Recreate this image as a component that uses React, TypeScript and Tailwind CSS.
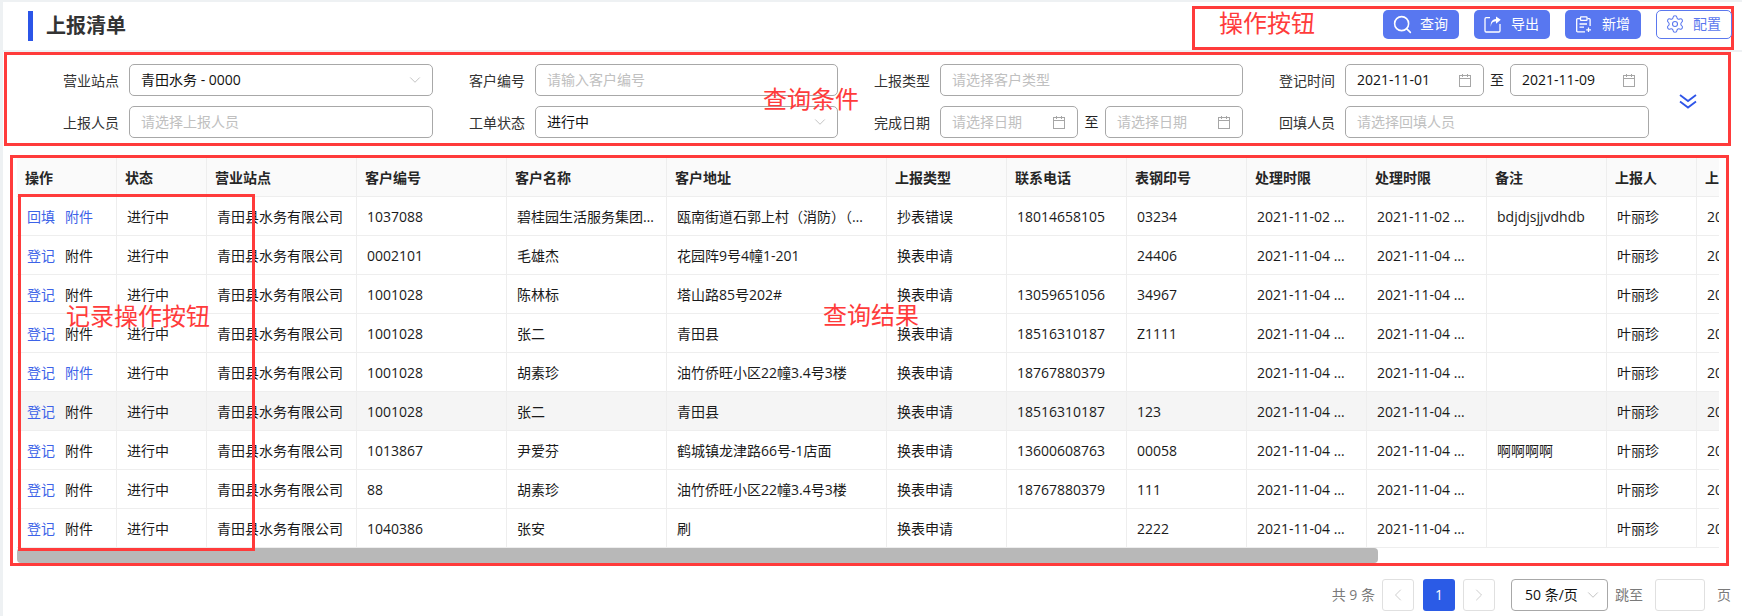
import React from "react";
import { ChevronDown, ChevronLeft, ChevronRight, Search, Settings } from "lucide-react";

type Row = {
   action: string;
   attachBlue?: boolean;
   code: string;
   name: string;
   address: string;
   type?: string;
   phone?: string;
   meter?: string;
   date?: string;
   note?: string;
   active?: boolean;
};

const headers = [
   "操作",
   "状态",
   "营业站点",
   "客户编号",
   "客户名称",
   "客户地址",
   "上报类型",
   "联系电话",
   "表钢印号",
   "处理时限",
   "处理时限",
   "备注",
   "上报人",
   "上报时间",
];

const rows: Row[] = [
   {
      action: "回填",
      attachBlue: true,
      code: "1037088",
      name: "碧桂园生活服务集团有限公司",
      address: "瓯南街道石郭上村（消防）（青田县）",
      type: "抄表错误",
      phone: "18014658105",
      meter: "03234",
      date: "2021-11-02 00:00:00",
      note: "bdjdjsjjvdhdb",
   },
   { action: "登记", code: "0002101", name: "毛雄杰", address: "花园阵9号4幢1-201", meter: "24406" },
   { action: "登记", code: "1001028", name: "陈林标", address: "塔山路85号202#", phone: "13059651056", meter: "34967" },
   { action: "登记", code: "1001028", name: "张二", address: "青田县", phone: "18516310187", meter: "Z1111" },
   {
      action: "登记",
      attachBlue: true,
      code: "1001028",
      name: "胡素珍",
      address: "油竹侨旺小区22幢3.4号3楼",
      phone: "18767880379",
   },
   { action: "登记", code: "1001028", name: "张二", address: "青田县", phone: "18516310187", meter: "123", active: true },
   {
      action: "登记",
      code: "1013867",
      name: "尹爱芬",
      address: "鹤城镇龙津路66号-1店面",
      phone: "13600608763",
      meter: "00058",
      note: "啊啊啊啊",
   },
   { action: "登记", code: "88", name: "胡素珍", address: "油竹侨旺小区22幢3.4号3楼", phone: "18767880379", meter: "111" },
   { action: "登记", code: "1040386", name: "张安", address: "刷", meter: "2222" },
];

function CalendarIcon() {
   return (
      <svg width="12" height="13" viewBox="0 0 12 13" fill="none" stroke="#a6a6a6" strokeWidth="1" className="shrink-0">
         <rect x="0.5" y="1.5" width="11" height="11" />
         <path d="M0.5 4.5H11.5M3.5 0V3M8.5 0V3" />
      </svg>
   );
}

function DoubleChevron() {
   return (
      <svg width="18" height="15" viewBox="0 0 18 15" fill="none" stroke="#2f55e8" strokeWidth="1.8">
         <path d="M1 1L9 7L17 1M1 7.5L9 13.5L17 7.5" />
      </svg>
   );
}

function ExportIcon() {
   return (
      <svg width="18" height="17" viewBox="0 0 18 17" fill="none" stroke="white" strokeWidth="1.3" className="shrink-0">
         <path d="M6 1.7H2.2A1.2 1.2 0 0 0 1 2.9V14.8A1.2 1.2 0 0 0 2.2 16H14.8A1.2 1.2 0 0 0 16 14.8V8" />
         <path d="M7 11C7 7.5 8.5 5.5 12 5.3V7.8L16.8 3.8L12 0.6V3C8 3.4 6 6.5 7 11Z" fill="white" stroke="none" />
      </svg>
   );
}

function AddIcon() {
   return (
      <svg width="16" height="17" viewBox="0 0 16 17" fill="none" stroke="white" strokeWidth="1.3" className="shrink-0">
         <path d="M4 2.7H1.6A0.9 0.9 0 0 0 0.7 3.6V15A0.9 0.9 0 0 0 1.6 15.9H9M11.5 2.7H13.2A0.9 0.9 0 0 1 14.1 3.6V10" />
         <rect x="4.5" y="0.8" width="6.5" height="3.5" rx="0.6" />
         <path d="M3.5 8H11M3.5 11.2H8M12.5 11.5V16M10.2 13.8H15" />
      </svg>
   );
}

function ActionButton(props: { icon: React.ReactNode; label: string; outline?: boolean }) {
   return (
      <button
         className={
            props.outline
               ? "w-[76px] h-[29px] pl-[10px] rounded-[5px] border border-[#5b78ee] bg-white text-[#5b78ee] flex items-center text-sm"
               : "w-[76px] h-[29px] pl-[11px] rounded-[5px] bg-[#5877f0] text-white flex items-center text-sm"
         }
      >
         <span className="w-[16px] h-[16px] flex items-center justify-center shrink-0">{props.icon}</span>
         <span className="ml-[10px]">{props.label}</span>
      </button>
   );
}

function TextBox(props: { value?: string; placeholder?: string; select?: boolean; narrow?: boolean }) {
   return (
      <div
         className={
            (props.narrow ? "w-[303px]" : "w-[304px]") +
            " shrink-0 h-[32px] rounded-[5px] border border-[#a8a8a8] bg-white pl-[11px] pr-[8px] flex items-center justify-between text-sm"
         }
      >
         {props.value ? (
            <span className="text-[#111]">{props.value}</span>
         ) : (
            <span className="text-[#c0c0c0]">{props.placeholder}</span>
         )}
         {props.select && <ChevronDown size={18} strokeWidth={0.9} color="#a6a6a6" />}
      </div>
   );
}

function DateBox(props: { value?: string; wide?: boolean }) {
   return (
      <div
         className={
            (props.wide ? "w-[139px]" : "w-[138px]") +
            " h-[32px] rounded-[5px] border border-[#a8a8a8] bg-white pl-[11px] pr-[12px] flex items-center justify-between text-sm"
         }
      >
         {props.value ? (
            <span className="text-[#111]">{props.value}</span>
         ) : (
            <span className="text-[#c0c0c0]">请选择日期</span>
         )}
         <CalendarIcon />
      </div>
   );
}

function DateRange(props: { from?: string; to?: string; wide?: boolean }) {
   return (
      <div className="w-[303px] shrink-0 flex items-center justify-between text-sm text-[#222]">
         <DateBox value={props.from} wide={props.wide} />
         <span>至</span>
         <DateBox value={props.to} />
      </div>
   );
}

function FormItem(props: { label: string; children: React.ReactNode }) {
   return (
      <div className="flex items-center">
         <label className="w-[93px] shrink-0 mr-[10px] text-right text-sm text-[#333] pt-[2px]">{props.label}</label>
         {props.children}
      </div>
   );
}

function Cell(props: { children?: React.ReactNode; date?: boolean }) {
   return (
      <td
         className={
            (props.date ? "pr-[18px]" : "pr-[10px]") +
            " h-[39px] pl-[10px] pt-[1px] border-b border-r border-[#eeeeee] text-sm text-[#1a1a1a] whitespace-nowrap overflow-hidden text-ellipsis"
         }
      >
         {props.children}
      </td>
   );
}

function PageBox(props: { children: React.ReactNode }) {
   return (
      <div className="w-[32px] h-[32px] rounded-[3px] border border-[#e0e0e0] bg-white flex items-center justify-center">
         {props.children}
      </div>
   );
}

export default function App() {
   return (
      <div className="w-[1742px] h-[616px] overflow-hidden bg-[#eef1f3] pl-[3px] pt-[2px] [font-family:'Open_Sans','Noto_Sans_CJK_SC',sans-serif]">
         <header className="h-[48px] bg-white flex items-center justify-between pl-[25px] pr-[8px]">
            <div className="flex items-center">
               <span className="w-[5px] h-[30px] bg-[#2b55e8]"></span>
               <h1 className="ml-[13px] text-[20px] font-bold text-[#333]">上报清单</h1>
            </div>
            <div className="w-[542px] h-[44px] border-3 border-[#ff3b3b] mt-[4px] flex items-center pl-[24px]">
               <span className="text-[24px] leading-none text-[#ff3b3b] mb-[10px]">操作按钮</span>
               <div className="ml-auto flex items-center gap-[15px] mr-[-1px] mb-[8px]">
                  <ActionButton label="查询" icon={<Search size={21} strokeWidth={1.8} className="shrink-0" />} />
                  <ActionButton label="导出" icon={<ExportIcon />} />
                  <ActionButton label="新增" icon={<AddIcon />} />
                  <ActionButton label="配置" outline icon={<Settings size={20} strokeWidth={1.3} className="shrink-0" />} />
               </div>
            </div>
         </header>

         <div className="h-[564px] mt-[2px] bg-white">
            <section className="relative ml-[1px] w-[1727px] h-[94px] border-3 border-[#ff3b3b] pt-[9px] pl-[19px] flex">
               <div className="grid grid-cols-[406px_405px_405px_407px] gap-y-[10px] content-start shrink-0">
                  <FormItem label="营业站点">
                     <TextBox value="青田水务 - 0000" select />
                  </FormItem>
                  <FormItem label="客户编号">
                     <TextBox placeholder="请输入客户编号" narrow />
                  </FormItem>
                  <FormItem label="上报类型">
                     <TextBox placeholder="请选择客户类型" narrow />
                  </FormItem>
                  <FormItem label="登记时间">
                     <DateRange from="2021-11-01" to="2021-11-09" wide />
                  </FormItem>
                  <FormItem label="上报人员">
                     <TextBox placeholder="请选择上报人员" />
                  </FormItem>
                  <FormItem label="工单状态">
                     <TextBox value="进行中" select narrow />
                  </FormItem>
                  <FormItem label="完成日期">
                     <DateRange />
                  </FormItem>
                  <FormItem label="回填人员">
                     <TextBox placeholder="请选择回填人员" />
                  </FormItem>
               </div>
               <div className="w-[78px] h-[74px] flex items-center justify-center">
                  <DoubleChevron />
               </div>
               <span className="absolute left-[756px] top-[28px] text-[24px] leading-[32px] text-[#ff3b3b]">查询条件</span>
            </section>

            <section className="relative mt-[9px] ml-[7px] w-[1719px] h-[411px] border-3 border-[#ff3b3b] pl-[4px]">
               <div className="w-[1702px] overflow-hidden">
                  <table className="table-fixed w-[1800px] border-separate border-spacing-0">
                     <colgroup>
                        <col className="w-[100px]" />
                        <col className="w-[90px]" />
                        <col className="w-[150px]" />
                        <col className="w-[150px]" />
                        <col className="w-[160px]" />
                        <col className="w-[220px]" />
                        <col className="w-[120px]" />
                        <col className="w-[120px]" />
                        <col className="w-[120px]" />
                        <col className="w-[120px]" />
                        <col className="w-[120px]" />
                        <col className="w-[120px]" />
                        <col className="w-[90px]" />
                        <col className="w-[120px]" />
                     </colgroup>
                     <thead>
                        <tr>
                           {headers.map((h, i) => (
                              <th
                                 key={i}
                                 className="h-[39px] pl-[8px] pt-[1px] text-left text-sm font-semibold text-[#262626] bg-[#fafafa] border-b border-r border-[#eeeeee] whitespace-nowrap"
                              >
                                 {h}
                              </th>
                           ))}
                        </tr>
                     </thead>
                     <tbody>
                        {rows.map((row, i) => (
                           <tr key={i} className={row.active ? "bg-[#f5f5f5]" : "bg-white"}>
                              <Cell>
                                 <span className="text-[#3d63e8]">{row.action}</span>
                                 <span className={row.attachBlue ? "ml-[10px] text-[#3d63e8]" : "ml-[10px]"}>附件</span>
                              </Cell>
                              <Cell>进行中</Cell>
                              <Cell>青田县水务有限公司</Cell>
                              <Cell>{row.code}</Cell>
                              <Cell>{row.name}</Cell>
                              <Cell>{row.address}</Cell>
                              <Cell>{row.type ?? "换表申请"}</Cell>
                              <Cell>{row.phone}</Cell>
                              <Cell>{row.meter}</Cell>
                              <Cell date>{row.date ?? "2021-11-04 00:00:00"}</Cell>
                              <Cell date>{row.date ?? "2021-11-04 00:00:00"}</Cell>
                              <Cell>{row.note}</Cell>
                              <Cell>叶丽珍</Cell>
                              <Cell date>{row.date ?? "2021-11-04 00:00:00"}</Cell>
                           </tr>
                        ))}
                     </tbody>
                  </table>
                  <div className="w-[1361px] h-[15px] rounded-[4px] bg-[#b8b8b8]"></div>
               </div>
               <div className="absolute left-[5px] top-[36px] w-[237px] h-[357px] border-3 border-[#ff3b3b]"></div>
               <span className="absolute left-[53px] top-[142px] text-[24px] leading-[32px] text-[#ff3b3b]">记录操作按钮</span>
               <span className="absolute left-[810px] top-[141px] text-[24px] leading-[32px] text-[#ff3b3b]">查询结果</span>
            </section>

            <footer className="mt-[13px] pr-[11px] flex items-center justify-end text-sm text-[#7a7a7a]">
               <span>共 9 条</span>
               <div className="ml-[7px]">
                  <PageBox>
                     <ChevronLeft size={20} strokeWidth={1} color="#c4c4c4" />
                  </PageBox>
               </div>
               <div className="ml-[9px] w-[32px] h-[32px] rounded-[3px] bg-[#2b5be6] text-white flex items-center justify-center">1</div>
               <div className="ml-[8px]">
                  <PageBox>
                     <ChevronRight size={20} strokeWidth={1} color="#c4c4c4" />
                  </PageBox>
               </div>
               <div className="ml-[16px] w-[97px] h-[32px] rounded-[4px] border border-[#a8a8a8] bg-white pl-[13px] pr-[5px] flex items-center justify-between text-[#111]">
                  <span>50 条/页</span>
                  <ChevronDown size={18} strokeWidth={0.9} color="#a6a6a6" />
               </div>
               <span className="ml-[7px]">跳至</span>
               <div className="ml-[12px] w-[50px] h-[32px] rounded-[3px] border border-[#e0e0e0] bg-white"></div>
               <span className="ml-[12px]">页</span>
            </footer>
         </div>
      </div>
   );
}
